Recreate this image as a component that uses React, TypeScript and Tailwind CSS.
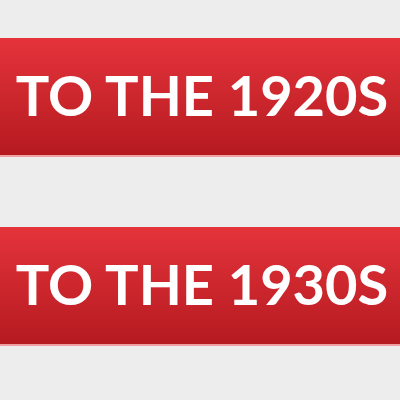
export default function App() {
    const eras = ["TO THE 1920S", "TO THE 1930S"];

    return (
        <div className="h-[400px] w-[400px] overflow-hidden bg-[#ededed] pt-[38px]">
            <div className="flex flex-col gap-[72px]">
                {eras.map((label) => (
                    <button
                        key={label}
                        className="flex h-[117px] w-full items-center justify-center bg-gradient-to-b from-[#e5333b] to-[#b51a20] pl-[4px] pb-[3px] shadow-[0_2px_0_#eea0a3] text-white"
                        style={{ fontFamily: "Lato, 'Liberation Sans', sans-serif" }}
                    >
                        <span className="text-[56px] font-bold leading-none">{label}</span>
                    </button>
                ))}
            </div>
        </div>
    );
}
